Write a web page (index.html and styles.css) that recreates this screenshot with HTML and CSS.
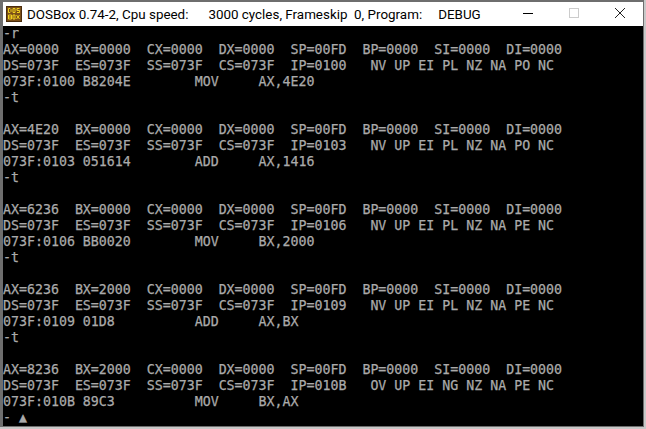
FILE: index.html
```
<!DOCTYPE html>
<html lang="en">
<head>
<meta charset="utf-8">
<title>DOSBox</title>
<link rel="stylesheet" href="styles.css">
</head>
<body>
<main class="window">
<header class="titlebar">
<svg class="appicon" width="16" height="16" viewBox="0 0 16 16"><rect width="16" height="16" fill="#4a2c0c"/><rect x="1" y="1" width="14" height="14" fill="#7a4f18"/><path d="M2.500 2.500v4h1.500l1-1v-2l-1-1zM7 2.500h2v4H7zM13.500 2.500h-2.500v2h2.500v2H11M2.500 9h3v4h-3zM2.500 11h3M7 9h2v4H7zM10.500 9l3 4M13.500 9l-3 4" fill="none" stroke="#f2d21e" stroke-width="1"/></svg>
<div class="title"><span>DOSBox 0.74-2, Cpu speed:</span><span class="t-cycles">3000 cycles, Frameskip&nbsp; 0, Program:</span><span class="t-prog">DEBUG</span></div>
<div class="controls">
<svg class="ctl" width="46" height="24" viewBox="0 0 46 24"><path d="M18 11.500h10" stroke="#000" stroke-width="1"/></svg>
<svg class="ctl" width="46" height="24" viewBox="0 0 46 24"><rect x="18.500" y="6.500" width="9" height="9" fill="none" stroke="#ccc"/></svg>
<svg class="ctl" width="46" height="24" viewBox="0 0 46 24"><path d="M18 6l10 10M28 6L18 16" stroke="#222" stroke-width="1" fill="none"/></svg>
</div>
</header>
<pre class="screen">-r
AX=0000  BX=0000  CX=0000  DX=0000  SP=00FD  BP=0000  SI=0000  DI=0000
DS=073F  ES=073F  SS=073F  CS=073F  IP=0100   NV UP EI PL NZ NA PO NC
073F:0100 B8204E        MOV     AX,4E20
-t

AX=4E20  BX=0000  CX=0000  DX=0000  SP=00FD  BP=0000  SI=0000  DI=0000
DS=073F  ES=073F  SS=073F  CS=073F  IP=0103   NV UP EI PL NZ NA PO NC
073F:0103 051614        ADD     AX,1416
-t

AX=6236  BX=0000  CX=0000  DX=0000  SP=00FD  BP=0000  SI=0000  DI=0000
DS=073F  ES=073F  SS=073F  CS=073F  IP=0106   NV UP EI PL NZ NA PE NC
073F:0106 BB0020        MOV     BX,2000
-t

AX=6236  BX=2000  CX=0000  DX=0000  SP=00FD  BP=0000  SI=0000  DI=0000
DS=073F  ES=073F  SS=073F  CS=073F  IP=0109   NV UP EI PL NZ NA PE NC
073F:0109 01D8          ADD     AX,BX
-t

AX=8236  BX=2000  CX=0000  DX=0000  SP=00FD  BP=0000  SI=0000  DI=0000
DS=073F  ES=073F  SS=073F  CS=073F  IP=010B   OV UP EI NG NZ NA PE NC
073F:010B 89C3          MOV     BX,AX
- ▲</pre>
</main>
</body>
</html>
```
FILE: styles.css
```
* { box-sizing: border-box; }
html, body { margin: 0; padding: 0; }
body { width: 646px; height: 429px; overflow: hidden; background: #c8c8c8; }
.window { width: 644px; height: 427px; border: 1px solid #6e6e6e; border-top-width: 2px; border-left-width: 3px; display: flex; flex-direction: column; background: #000; }
.titlebar { height: 24px; background: #fff; display: flex; align-items: center; flex: none; padding-left: 3px; }
.appicon { flex: none; }
.title { flex: 1; min-width: 0; display: flex; font: 13.4px Roboto, sans-serif; color: #000; padding-left: 5px; white-space: pre; }
.t-cycles { margin-left: 20px; }
.t-prog { margin-left: 16px; }
.controls { display: flex; flex: none; }
.screen { flex: 1; margin: 0; background: #000; color: #aaa; font: 13.28px/16px "DejaVu Sans Mono", monospace; -webkit-text-stroke: 0.25px #aaa; overflow: hidden; }
```
